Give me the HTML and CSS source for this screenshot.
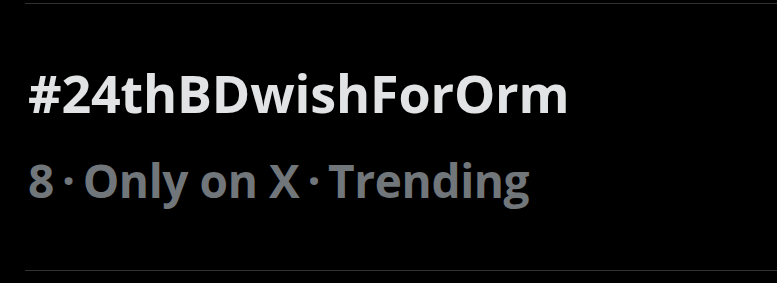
FILE: index.html
```html
<!DOCTYPE html>
<html lang="en">
<head>
    <meta charset="UTF-8">
    <meta name="viewport" content="width=device-width, initial-scale=1.0">
    <title>Trend</title>
    <link rel="stylesheet" href="styles.css">
</head>
<body>

    <!-- trend row -->
    <div class="trend">
        <div class="trend-name">#24thBDwishForOrm</div>
        <div class="trend-meta">8<span class="dot">·</span>Only on X<span class="dot">·</span>Trending</div>
    </div>

</body>
</html>
```

FILE: styles.css
```css
body {
    margin: 0;
    background-color: #000;
    font-family: "Open Sans", "Liberation Sans", sans-serif;
}
.trend {
    margin-top: 3px;
    margin-left: 25px;
    height: 268px;
    border-top: 1px solid #2f3336;
    border-bottom: 1px solid #2f3336;
    padding-left: 3px;
    box-sizing: border-box;
    padding-top: 57px;
}
.trend-name {
    color: #e1e3e4;
    font-weight: bold;
    font-size: 52px;
    line-height: 64px;
    letter-spacing: -0.15px;
}
.trend-meta {
    color: #71767b;
    font-weight: bold;
    font-size: 46px;
    line-height: 60px;
    margin-top: 25px;
    letter-spacing: -0.4px;
}
.dot {
    margin: 0 8px;
}
```
